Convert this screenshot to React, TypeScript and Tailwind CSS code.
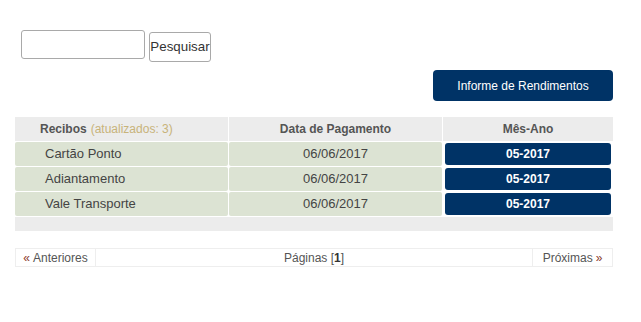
import React from 'react';

const rows = [
  { nome: 'Cartão Ponto', data: '06/06/2017', ref: '05-2017' },
  { nome: 'Adiantamento', data: '06/06/2017', ref: '05-2017' },
  { nome: 'Vale Transporte', data: '06/06/2017', ref: '05-2017' },
];

const App: React.FC = () => {
  return (
    <div className="min-h-screen bg-white pl-[15px] pt-[30px] font-['Liberation_Sans',Arial,sans-serif]">
      <div className="w-[598px]">
        <div className="ml-[6px] flex items-start gap-[4px]">
          <input
            type="text"
            className="h-[29px] w-[124px] rounded-[3px] border border-[#a9a9a9] bg-white px-2 text-[13px] outline-none"
          />
          <button className="mt-[2px] h-[30px] w-[62px] rounded-[3px] border border-[#a9a9a9] bg-white px-0 text-[13.33px] text-[#333]">
            Pesquisar
          </button>
        </div>

        <div className="mt-[8px] flex justify-end">
          <button className="h-[31px] w-[180px] rounded-[4px] bg-[#003366] text-[12px] text-white">
            Informe de Rendimentos
          </button>
        </div>

        <div className="mt-[16px] grid grid-cols-[213px_213px_170px] gap-px bg-white">
          <div className="flex h-[24px] items-center bg-[#ececec] pl-[25px] text-[12px]">
            <span className="font-bold text-[#555]">Recibos</span>
            <span className="ml-[4px] text-[#c8b37a]">(atualizados: 3)</span>
          </div>
          <div className="flex h-[24px] items-center justify-center bg-[#ececec] text-[12px] font-bold text-[#555]">
            Data de Pagamento
          </div>
          <div className="flex h-[24px] items-center justify-center bg-[#ececec] text-[12px] font-bold text-[#555]">
            Mês-Ano
          </div>

          {rows.map((r) => (
            <React.Fragment key={r.nome}>
              <div className="flex h-[24px] items-center rounded-[2px] bg-[#dce3d3] pl-[30px] text-[13px] text-[#444]">
                {r.nome}
              </div>
              <div className="flex h-[24px] items-center justify-center rounded-[2px] bg-[#dce3d3] text-[13px] text-[#444]">
                {r.data}
              </div>
              <div className="h-[24px] bg-white px-[2px] py-px">
                <div className="flex h-full items-center justify-center rounded-[3px] bg-[#003366] text-[12px] font-bold text-white">
                  {r.ref}
                </div>
              </div>
            </React.Fragment>
          ))}

          <div className="col-span-3 h-[14px] bg-[#ececec]" />
        </div>

        <div className="mt-[17px] flex h-[19px] border border-[#eeeeee] text-[12px] text-[#555]">
          <div className="flex w-[80px] items-center justify-center border-r border-[#eeeeee]">
            <span className="text-[#8b3a2a]">«</span>
            <span className="ml-[3px]">Anteriores</span>
          </div>
          <div className="flex flex-1 items-center justify-center">
            Páginas [<span className="font-bold text-[#333]">1</span>]
          </div>
          <div className="flex w-[80px] items-center justify-center border-l border-[#eeeeee]">
            <span>Próximas</span>
            <span className="ml-[3px] text-[#8b3a2a]">»</span>
          </div>
        </div>
      </div>
    </div>
  );
};

export default App;
